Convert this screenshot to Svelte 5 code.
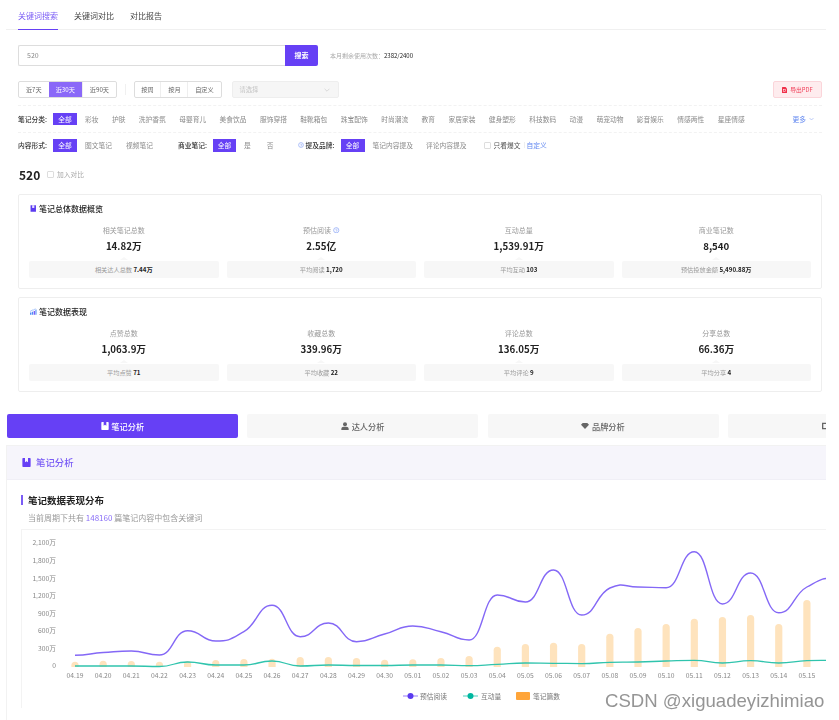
<script>
  const cats = ['彩妆','护肤','洗护香氛','母婴育儿','美食饮品','服饰穿搭','鞋靴箱包','珠宝配饰','时尚潮流','教育','家居家装','健身塑形','科技数码','动漫','萌宠动物','影音娱乐','情感两性','星座情感'];
  const overview = [
    { label: '相关笔记总数', value: '14.82万', sub: '相关达人总数', num: '7.44万' },
    { label: '预估阅读', info: true, value: '2.55亿', sub: '平均阅读', num: '1,720' },
    { label: '互动总量', value: '1,539.91万', sub: '平均互动', num: '103' },
    { label: '商业笔记数', value: '8,540', sub: '预估投放金额', num: '5,490.88万' }
  ];
  const perf = [
    { label: '点赞总数', value: '1,063.9万', sub: '平均点赞', num: '71' },
    { label: '收藏总数', value: '339.96万', sub: '平均收藏', num: '22' },
    { label: '评论总数', value: '136.05万', sub: '平均评论', num: '9' },
    { label: '分享总数', value: '66.36万', sub: '平均分享', num: '4' }
  ];
  const dates = ['04.19','04.20','04.21','04.22','04.23','04.24','04.25','04.26','04.27','04.28','04.29','04.30','05.01','05.02','05.03','05.04','05.05','05.06','05.07','05.08','05.09','05.10','05.11','05.12','05.13','05.14','05.15'];
  const yLabels = [['2,100万',542],['1,800万',560],['1,500万',578],['1,200万',595],['900万',613],['600万',630],['300万',648],['0',665]];
  const read = [655.3,652.5,651,655,630.7,641,631.7,605.3,636.7,623,641.7,634,626,631.7,640,595,602,570,615,588,587,587.7,551.7,604,573,612.7,587,578];
  const inter = [666,666,666,666.5,662,665,665,661,666,665,665.5,665.5,665,665,665.7,664.3,663,663.3,663.6,662.3,662,661,660.3,663,660.7,663,660.7,660.5];
  const bars = [661.7,660.7,661,661.7,661,660,659,658.7,657,657,658,659.7,659.3,658,656,646.7,644,642.7,644,633.7,628,624,618.7,617,615,624,600];
  const OX = 21, OY = 529;
  const xAt = (i) => 75 + i * 28.15;
  function smooth(ys) {
    const p = ys.map((y, i) => [xAt(i), y]);
    let d = `M${p[0][0]} ${p[0][1]}`;
    for (let i = 0; i < p.length - 1; i++) {
      const a = p[i - 1] || p[i], b = p[i], c = p[i + 1], e = p[i + 2] || c;
      const k = 0.22, h = 14;
      let s1 = (c[1] - a[1]) * k, s2 = (e[1] - b[1]) * k;
      if ((b[1] - a[1]) * (c[1] - b[1]) <= 0) s1 = 0;
      if ((c[1] - b[1]) * (e[1] - c[1]) <= 0) s2 = 0;
      d += ` C${(b[0] + h).toFixed(1)} ${(b[1] + s1).toFixed(1)} ${(c[0] - h).toFixed(1)} ${(c[1] - s2).toFixed(1)} ${c[0].toFixed(1)} ${c[1]}`;
    }
    return d;
  }
  const readPath = smooth(read);
  const interPath = smooth(inter);
</script>

{#snippet noteIcon(cls)}
  <svg class={cls} viewBox="0 0 12 12"><path fill="currentColor" d="M1.5 0H10.5A1 1 0 0 1 11.5 1V11A1 1 0 0 1 10.5 12H1.5A1 1 0 0 1 .5 11V1A1 1 0 0 1 1.5 0Z"/><path fill="var(--mark)" d="M4 0H8V5.5L6 4.2 4 5.5Z"/></svg>
{/snippet}

{#snippet stats(items)}
  <div class="stats">
    {#each items as s}
      <div class="stat">
        <div class="label">{s.label}{#if s.info}<svg class="qm" viewBox="0 0 10 10"><circle cx="5" cy="5" r="4" fill="none" stroke="#7f9cf5" stroke-width="1"/><path d="M3.8 4Q5 2.6 6.2 4T5 5.8V6.6M5 7.2V8" fill="none" stroke="#7f9cf5" stroke-width=".8"/></svg>{/if}</div>
        <div class="value">{s.value}</div>
        <div class="sub">{s.sub} <b>{s.num}</b></div>
      </div>
    {/each}
  </div>
{/snippet}

<div class="page">
  <nav class="tabs">
    <span class="tab on">关键词搜索</span>
    <span class="tab">关键词对比</span>
    <span class="tab">对比报告</span>
  </nav>

  <div class="content">
    <div class="search">
      <div class="input">520</div>
      <div class="go">搜索</div>
      <div class="quota">本月剩余使用次数：<span>2382/2400</span></div>
    </div>

    <div class="dates">
      <div class="seg">
        <span>近7天</span><span class="sel">近30天</span><span>近90天</span>
      </div>
      <i class="vsep"></i>
      <div class="seg seg2">
        <span>按周</span><span>按月</span><span>自定义</span>
      </div>
      <div class="select">请选择
        <svg viewBox="0 0 10 6"><path d="M1 1L5 5 9 1" fill="none" stroke="#bbb" stroke-width=".8"/></svg>
      </div>
      <div class="pdf">
        <svg viewBox="0 0 10 12"><path fill="#f0304a" d="M1 0H7L10 3V11A1 1 0 0 1 9 12H1A1 1 0 0 1 0 11V1A1 1 0 0 1 1 0Z"/><rect x="3" y="4.5" width="4" height="4" fill="none" stroke="#fff" stroke-width="1"/></svg>
        导出PDF
      </div>
    </div>

    <div class="filter f1">
      <b class="key">笔记分类:</b>
      <span class="chip">全部</span>
      <div class="cats">
        {#each cats as c}<span>{c}</span>{/each}
      </div>
      <span class="more">更多
        <svg viewBox="0 0 10 6"><path d="M1 1L5 5 9 1" fill="none" stroke="#6f8ff0" stroke-width=".9"/></svg>
      </span>
    </div>

    <div class="filter f2">
      <b class="key">内容形式:</b>
      <span class="chip">全部</span>
      <span class="opt o1">图文笔记</span>
      <span class="opt o2">视频笔记</span>
      <b class="key k2">商业笔记:</b>
      <span class="chip">全部</span>
      <span class="opt o3">是</span>
      <span class="opt o4">否</span>
      <svg class="q2" viewBox="0 0 10 10"><circle cx="5" cy="5" r="4" fill="none" stroke="#7f9cf5" stroke-width="1"/><path d="M3.8 4Q5 2.6 6.2 4T5 5.8V6.6M5 7.2V8" fill="none" stroke="#7f9cf5" stroke-width=".8"/></svg>
      <b class="key">提及品牌:</b>
      <span class="chip">全部</span>
      <span class="opt o5">笔记内容提及</span>
      <span class="opt o6">评论内容提及</span>
      <i class="box"></i>
      <span class="only">只看爆文</span>
      <i class="tiny"></i>
      <span class="custom">自定义</span>
    </div>

    <div class="keyword">
      <strong>520</strong>
      <i class="box"></i>
      <span>加入对比</span>
    </div>

    <section class="card">
      <h3>
        <svg class="ci" viewBox="0 0 12 12"><rect x="1" y="0" width="10" height="12" fill="#5b3bf0"/><rect x="4" y="0" width="4" height="5" fill="#fff" opacity=".85"/></svg>
        笔记总体数据概览
      </h3>
      {@render stats(overview)}
    </section>

    <section class="card c2">
      <h3>
        <svg class="ci" viewBox="0 0 12 12"><path fill="#4f8cf7" d="M0 8H2.4V12H0ZM3.4 6.5H5.8V12H3.4Z"/><path fill="#7a5cf5" d="M6.8 5H9.2V12H6.8Z"/><path fill="#4f8cf7" d="M10 2.5H12V12H10Z"/><path d="M0 6L4 3.5 7 3 10 .8" fill="none" stroke="#4f8cf7" stroke-width=".9"/></svg>
        笔记数据表现
      </h3>
      {@render stats(perf)}
    </section>
  </div>

  <div class="bigtabs">
    <div class="bt active">
      {@render noteIcon('bi')}笔记分析
    </div>
    <div class="bt">
      <svg class="bi" viewBox="0 0 12 12"><circle cx="6" cy="3.2" r="3" fill="currentColor"/><path fill="currentColor" d="M.5 12V10Q.5 7.2 4 7H8Q11.5 7.2 11.5 10V12Z"/></svg>达人分析
    </div>
    <div class="bt">
      <svg class="bi" viewBox="0 0 12 12"><path fill="currentColor" d="M0 4L2.5 1.5H9.5L12 4 6 10.5Z"/></svg>品牌分析
    </div>
    <div class="bt last">
      <svg class="bi" viewBox="0 0 12 12"><path fill="currentColor" fill-rule="evenodd" d="M0 1H12V11H0ZM2 3V9H10V3Z"/></svg>
    </div>
  </div>

  <section class="panel">
    <header>
      {@render noteIcon('pi')}笔记分析
    </header>
    <h4>笔记数据表现分布</h4>
    <p>当前周期下共有 <em>148160</em> 篇笔记内容中包含关键词</p>
    <div class="chart">
      <svg width="806" height="178" viewBox="{OX} {OY} 806 178">
        {#each yLabels as [t, y]}
          <text class="ax" x="56" y={y + 2.5} text-anchor="end">{t}</text>
        {/each}
        {#each dates as d, i}
          <text class="ax" x={xAt(i)} y="677.5" text-anchor="middle">{d}</text>
          <path fill="#fee3bd" d="M{xAt(i) - 3.6} 667V{bars[i] + 3.6}a3.6 3.6 0 0 1 7.2 0V667Z"/>
        {/each}
        <path d={readPath} fill="none" stroke="#8468f6" stroke-width="1.4"/>
        <path d={interPath} fill="none" stroke="#30c4ad" stroke-width="1.3"/>
        <path d="M403 696H418" stroke="#6a45f7" stroke-width=".7"/>
        <circle cx="410.5" cy="696" r="3" fill="#5b3bf0"/>
        <text class="lg" x="420" y="699">预估阅读</text>
        <path d="M463 696H478" stroke="#00b8a0" stroke-width=".7"/>
        <circle cx="470.5" cy="696" r="3" fill="#00b8a0"/>
        <text class="lg" x="481" y="699">互动量</text>
        <rect x="516" y="692" width="14" height="8" rx="1" fill="#ffa53a"/>
        <text class="lg" x="533" y="699">笔记篇数</text>
      </svg>
    </div>
  </section>
</div>
<div class="mark">CSDN @xiguadeyizhimiao</div>

<style>
  :global(body) { margin: 0; background: #fff; }
  * { box-sizing: border-box; }
  .page {
    --violet: #6640f5;
    width: 826px; height: 720px; overflow: hidden; position: relative;
    font-family: "Noto Sans CJK SC", "Noto Sans", sans-serif;
    color: #333; filter: blur(.4px);
  }
  b { font-weight: 700; }
  i { display: block; font-style: normal; }
  .tabs {
    margin-left: 6px; height: 30px; padding-left: 12px;
    display: flex; gap: 16px; border-bottom: 1px solid #f0f0f0;
  }
  .tab { font-size: 8px; line-height: 32px; height: 30px; color: #444; width: 40px; white-space: nowrap; }
  .tab.on { color: #7a5cf5; border-bottom: 1px solid #6640f5; }
  .content { padding: 0 4px 0 18px; }

  .search { display: flex; align-items: center; margin-top: 15px; height: 21px; }
  .input {
    width: 267px; height: 21px; border: 1px solid #ddd; border-right: 0; border-radius: 2px 0 0 2px;
    font-size: 7px; line-height: 19px; padding-left: 8px; color: #888;
  }
  .go {
    width: 33px; height: 21px; background: var(--violet); color: #fff; font-size: 7px; font-weight: 700;
    text-align: center; line-height: 21px; border-radius: 0 2px 2px 0;
  }
  .quota { margin-left: 12px; font-size: 6px; color: #aaa; }
  .quota span { color: #222; }

  .dates { display: flex; align-items: center; margin-top: 15px; height: 17px; }
  .seg { display: flex; width: 99px; height: 17px; border: 1px solid #ddd; border-radius: 2px; font-size: 6.2px; color: #666; }
  .seg span { flex: 1 1 auto; text-align: center; line-height: 15px; border-left: 1px solid #eee; }
  .seg span:first-child { border-left: 0; }
  .seg .sel { background: #8a68f8; color: #fff; border-left: 0; }
  .vsep { width: 1px; height: 11px; background: #f0f0f0; margin: 0 8px 0 7.5px; }
  .seg2 { width: 88px; }
  .select {
    margin-left: 10px; width: 107px; height: 17px; background: #f6f6f6; border: 1px solid #eee; border-radius: 2px;
    font-size: 6.3px; line-height: 15px; color: #c4c4c4; padding-left: 7px; padding-right: 3px;
    display: flex; justify-content: space-between; align-items: center;
  }
  .select svg { width: 6px; height: 4px; margin-right: 5px; }
  .pdf {
    margin-left: auto; width: 49px; height: 17px; background: #feecee; border: 1px solid #fbd5da; border-radius: 2px;
    font-size: 5.8px; color: #f0405a; display: flex; align-items: center; justify-content: center; gap: 3px;
  }
  .pdf svg { width: 5px; height: 6px; }

  .filter { display: flex; align-items: center; font-size: 6.75px; color: #8a8a8a; white-space: nowrap; }
  .f1 { margin-top: 7px; height: 28px; border-top: 1px dashed #f2f2f2; border-bottom: 1px dashed #f2f2f2; }
  .f2 { height: 24.5px; }
  .key { color: #333; font-weight: 500; width: 35px; flex: none; }
  .chip {
    width: 24px; height: 12.5px; background: var(--violet); color: #fff; font-size: 6.75px;
    text-align: center; line-height: 12.5px; flex: none;
  }
  .cats { display: flex; gap: 13.38px; margin-left: 8px; }
  .more { margin-left: auto; margin-right: 8px; color: #5f86f0; display: flex; align-items: center; gap: 3px; }
  .more svg { width: 5px; height: 4px; }
  .opt { flex: none; }
  .o1 { margin-left: 8px; }
  .o2 { margin-left: 14px; }
  .k2 { margin-left: 25px; }
  .f2 .k2 + .chip { width: 23px; }
  .o3 { margin-left: 8px; }
  .o4 { margin-left: 16px; }
  .q2 { margin: 0 2px 0 24px; width: 6px; height: 6px; flex: none; }
  .o5 { margin-left: 8px; }
  .o6 { margin-left: 13px; }
  .box { width: 7px; height: 7px; border: 1px solid #ddd; border-radius: 1px; flex: none; }
  .f2 .box { margin-left: 17px; }
  .only { margin-left: 3px; color: #555; }
  .tiny { width: 1px; height: 6px; background: #eee; margin: 0 2px 0 3px; }
  .custom { color: #5f86f0; }

  .keyword { display: flex; align-items: center; height: 20px; margin-top: 6.5px; padding-left: 1px; }
  .keyword strong { font-size: 12px; font-weight: 700; color: #222; width: 28px; }
  .keyword span { font-size: 6.75px; color: #aaa; margin-left: 3px; }

  .card { margin-top: 10px; height: 95px; border: 1px solid #eee; border-radius: 2px; padding: 0 10px; }
  .c2 { margin-top: 8px; }
  h3 {
    margin: 0; height: 27.5px; display: flex; align-items: center; gap: 2.5px; padding-left: 1px;
    font-size: 8px; font-weight: 500; color: #222; line-height: 1;
  }
  .ci { width: 6.5px; height: 7px; flex: none; }
  .stats { display: grid; grid-template-columns: repeat(4, 1fr); gap: 8px; }
  .stat { text-align: center; }
  .label { font-size: 7px; color: #999; height: 14.5px; line-height: 14px; }
  .qm { width: 6.5px; height: 6.5px; margin-left: 2px; vertical-align: -.5px; }
  .value { font-size: 9.7px; font-weight: 700; color: #222; height: 18px; line-height: 18px; }
  .sub {
    position: relative; margin-top: 5.5px; height: 17.5px; background: #f7f7f7; border-radius: 2px;
    font-size: 6.2px; line-height: 17.5px; color: #999;
  }
  .sub b { color: #222; }
  .sub::before {
    content: ''; position: absolute; left: 50%; top: -3.5px; margin-left: -4px;
    border: 4px solid transparent; border-top: 0; border-bottom: 3.5px solid #f7f7f7;
  }

  .bigtabs { display: grid; grid-template-columns: repeat(4, 231px); gap: 9.3px; margin: 21.5px 0 0 7px; height: 24px; }
  .bt {
    background: #f7f7f7; border-radius: 2px; color: #666; font-size: 8.2px; font-weight: 500;
    display: flex; align-items: center; justify-content: center; gap: 2.5px; --mark: #f7f7f7;
  }
  .bt.active { background: var(--violet); color: #fff; --mark: var(--violet); }
  .bt.last { justify-content: flex-start; padding-left: 94px; }
  .bi { width: 8px; height: 8px; flex: none; }

  .panel { margin: 7px 0 0 6px; border: 1px solid #f2f2f2; border-right: 0; height: 300px; }
  header {
    height: 34px; background: #f6f5fb; display: flex; align-items: center; gap: 5px; padding-left: 15px;
    font-size: 9.4px; font-weight: 500; color: #7a5cf5; --mark: #f6f5fb; border-bottom: 1px solid #f0eff6;
  }
  .pi { width: 9px; height: 9px; color: var(--violet); flex: none; }
  h4 {
    margin: 15px 0 0 14px; padding-left: 5px; border-left: 2px solid #7a5cf5;
    font-size: 9.5px; font-weight: 700; color: #222; height: 10px; line-height: 10px;
  }
  p { margin: 7px 0 0 21px; font-size: 8px; line-height: 12px; color: #999; }
  em { font-style: normal; color: #8a6ff7; }
  .chart { margin: 5px 0 0 14px; width: 806px; height: 179px; border: 1px solid #f3f3f3; border-right: 0; border-bottom: 0; }
  .chart svg { display: block; margin: -1px 0 0 -1px; overflow: hidden; }
  .ax { font-size: 6.75px; fill: #888; }
  .lg { font-size: 6.75px; fill: #777; }

  .mark {
    position: absolute; left: 605px; top: 690px; font: 18.6px/22px "Liberation Sans", sans-serif;
    color: #959595; white-space: nowrap;
  }
</style>
